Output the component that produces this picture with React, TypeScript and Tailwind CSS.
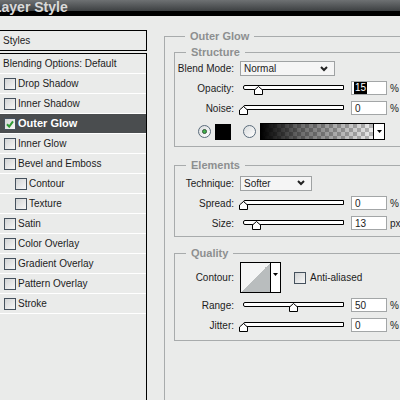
import type { ReactNode } from 'react';

const styleItems = [
  { label: 'Drop Shadow' },
  { label: 'Inner Shadow' },
  { label: 'Outer Glow', checked: true, active: true },
  { label: 'Inner Glow' },
  { label: 'Bevel and Emboss' },
  { label: 'Contour', indent: true },
  { label: 'Texture', indent: true },
  { label: 'Satin' },
  { label: 'Color Overlay' },
  { label: 'Gradient Overlay' },
  { label: 'Pattern Overlay' },
  { label: 'Stroke' },
];

function CheckBox({ checked }: { checked?: boolean }) {
  return (
    <span className="flex h-[12px] w-[12px] shrink-0 items-center justify-center border border-[#45515d] bg-[linear-gradient(135deg,#d2d4d5,#f7f7f7)]">
      {checked && (
        <svg width="8" height="8" viewBox="0 0 8 8">
          <path d="M1 4.2 L3.2 6.6 L7 1.4" fill="none" stroke="#2f9a35" strokeWidth="2" />
        </svg>
      )}
    </span>
  );
}

function Radio({ checked }: { checked?: boolean }) {
  return (
    <span className="flex h-[13px] w-[13px] shrink-0 items-center justify-center rounded-full border border-[#5b6c7c] bg-[linear-gradient(135deg,#d9dcdd,#ffffff)]">
      {checked && <span className="h-[5px] w-[5px] rounded-full border border-[#35553a] bg-[#3fb24a]" />}
    </span>
  );
}

function Chevron() {
  return (
    <svg width="8" height="6" viewBox="0 0 8 6">
      <path d="M1 1 L4 4 L7 1" fill="none" stroke="#222" strokeWidth="2" />
    </svg>
  );
}

function Select({ value, width }: { value: string; width: string }) {
  return (
    <div className={`ml-[6px] flex h-[15px] items-center justify-between border border-[#9fa2a3] bg-[#f5f5f5] pl-[3px] pr-[6px] ${width}`}>
      <span>{value}</span>
      <Chevron />
    </div>
  );
}

function Slider({ value }: { value: number }) {
  return (
    <div className="relative ml-[9px] h-[14px] w-[101px] shrink-0">
      <div className="absolute left-0 right-0 top-[4px] h-[5px] rounded-l-[2px] border border-black bg-white" />
      <svg className="absolute top-[5px]" style={{ left: value - 4 }} width="9" height="9" viewBox="0 0 9 9">
        <path d="M4.5 0.5 L8.5 4 V8.5 H0.5 V4 Z" fill="#fff" stroke="#000" />
      </svg>
    </div>
  );
}

function NumberField({ value, selected }: { value: string; selected?: boolean }) {
  return (
    <div className="ml-[7px] flex h-[14px] w-[36px] shrink-0 items-center border border-[#a3a6a7] bg-white pl-[2px]">
      {selected ? <span className="bg-black px-[1px] leading-[12px] text-white">{value}</span> : <span className="pl-[1px]">{value}</span>}
    </div>
  );
}

function SliderRow({ label, value, unit, selected, className = '' }: { label: string; value: number; unit: string; selected?: boolean; className?: string }) {
  return (
    <div className={`flex h-[14px] items-center ${className}`}>
      <span className="w-[59px] shrink-0 text-right">{label}</span>
      <Slider value={value} />
      <NumberField value={String(value)} selected={selected} />
      <span className="ml-[3px]">{unit}</span>
    </div>
  );
}

function Group({ title, children, className = '' }: { title: string; children: ReactNode; className?: string }) {
  return (
    <fieldset className={`border border-[#a8abac] ${className}`}>
      <legend className="ml-[11px] px-[5px] text-[11px] font-bold leading-[13px] text-[#8d8f90]">{title}</legend>
      {children}
    </fieldset>
  );
}

export default function App() {
  return (
    <div className="flex h-[400px] w-[400px] flex-col overflow-hidden bg-[#eaebea] font-['Liberation_Sans',Arial,sans-serif] text-[10px] text-[#1c1c1c]">
      <div className="h-[16px] shrink-0 bg-[linear-gradient(to_bottom,#6e7173_0px,#3d4042_11px,#000_11px,#000_16px)]">
        <div className="-ml-[7px] text-[14px] font-bold leading-[14px] text-[#d9d9d9]">Layer Style</div>
      </div>

      <div className="flex flex-1">
        {/* styles list */}
        <div className="flex w-[147px] shrink-0 flex-col">
          <div className="mt-[14px] flex h-[21px] items-center border-y border-r border-black pl-[3px]">Styles</div>
          <div className="mt-[2px] flex-1 border-t border-r border-black">
            <div className="flex h-[20px] items-center border-b border-white pl-[3px]">Blending Options: Default</div>
            {styleItems.map((item) => (
              <div
                key={item.label}
                className={`flex h-[20px] items-center gap-[2px] border-b border-white ${item.indent ? 'pl-[15px]' : 'pl-[4px]'} ${
                  item.active ? 'bg-[#4a4d4f] text-[11px] font-bold text-white' : ''
                }`}
              >
                <CheckBox checked={item.checked} />
                <span>{item.label}</span>
              </div>
            ))}
          </div>
        </div>

        {/* settings */}
        <div className="ml-[17px] mt-[14px] w-[260px] shrink-0">
          <Group title="Outer Glow" className="h-[400px] pl-[9px] pr-[10px]">
            <Group title="Structure" className="mt-[3px] pb-[6px]">
              <div className="mt-[2px] flex h-[15px] items-center">
                <span className="w-[59px] shrink-0 text-right">Blend Mode:</span>
                <Select value="Normal" width="w-[95px]" />
              </div>
              <SliderRow label="Opacity:" value={15} unit="%" selected className="mt-[5px]" />
              <SliderRow label="Noise:" value={0} unit="%" className="mt-[6px]" />
              <div className="mt-[8px] flex h-[17px] items-center">
                <span className="ml-[23px]"><Radio checked /></span>
                <span className="ml-[4px] h-[16px] w-[16px] bg-black" />
                <span className="ml-[12px]"><Radio /></span>
                <div className="ml-[4px] flex h-[17px] border border-black">
                  <div className="h-full w-[112px] bg-[conic-gradient(#b5b5b5_25%,#ececec_0_50%,#b5b5b5_0_75%,#ececec_0)] bg-[length:8px_8px]">
                    <div className="h-full w-full bg-[linear-gradient(to_right,#000,rgba(0,0,0,0.55)_35%,rgba(0,0,0,0))]" />
                  </div>
                  <div className="flex w-[11px] items-center justify-center border-l border-black bg-white">
                    <svg width="5" height="3" viewBox="0 0 5 3">
                      <path d="M0 0 H5 L2.5 3 Z" fill="#000" />
                    </svg>
                  </div>
                </div>
              </div>
            </Group>

            <Group title="Elements" className="mt-[12px] pb-[6px]">
              <div className="mt-[4px] flex h-[14px] items-center">
                <span className="w-[59px] shrink-0 text-right">Technique:</span>
                <Select value="Softer" width="w-[72px]" />
              </div>
              <SliderRow label="Spread:" value={0} unit="%" className="mt-[6px]" />
              <SliderRow label="Size:" value={13} unit="px" className="mt-[6px]" />
            </Group>

            <Group title="Quality" className="mt-[10px] pb-[8px]">
              <div className="mt-[2px] flex h-[31px] items-center">
                <span className="w-[59px] shrink-0 text-right">Contour:</span>
                <div className="ml-[6px] flex h-[31px] w-[41px] border border-black bg-white">
                  <div className="h-full w-[29px] bg-[linear-gradient(to_bottom_right,#f4f5f5_50%,#b9bdbe_50%)]" />
                  <div className="flex flex-1 justify-center border-l border-black pt-[10px]">
                    <svg width="5" height="3" viewBox="0 0 5 3">
                      <path d="M0 0 H5 L2.5 3 Z" fill="#000" />
                    </svg>
                  </div>
                </div>
                <span className="ml-[13px]"><CheckBox /></span>
                <span className="ml-[4px]">Anti-aliased</span>
              </div>
              <SliderRow label="Range:" value={50} unit="%" className="mt-[5px]" />
              <SliderRow label="Jitter:" value={0} unit="%" className="mt-[6px]" />
            </Group>
          </Group>
        </div>
      </div>
    </div>
  );
}
